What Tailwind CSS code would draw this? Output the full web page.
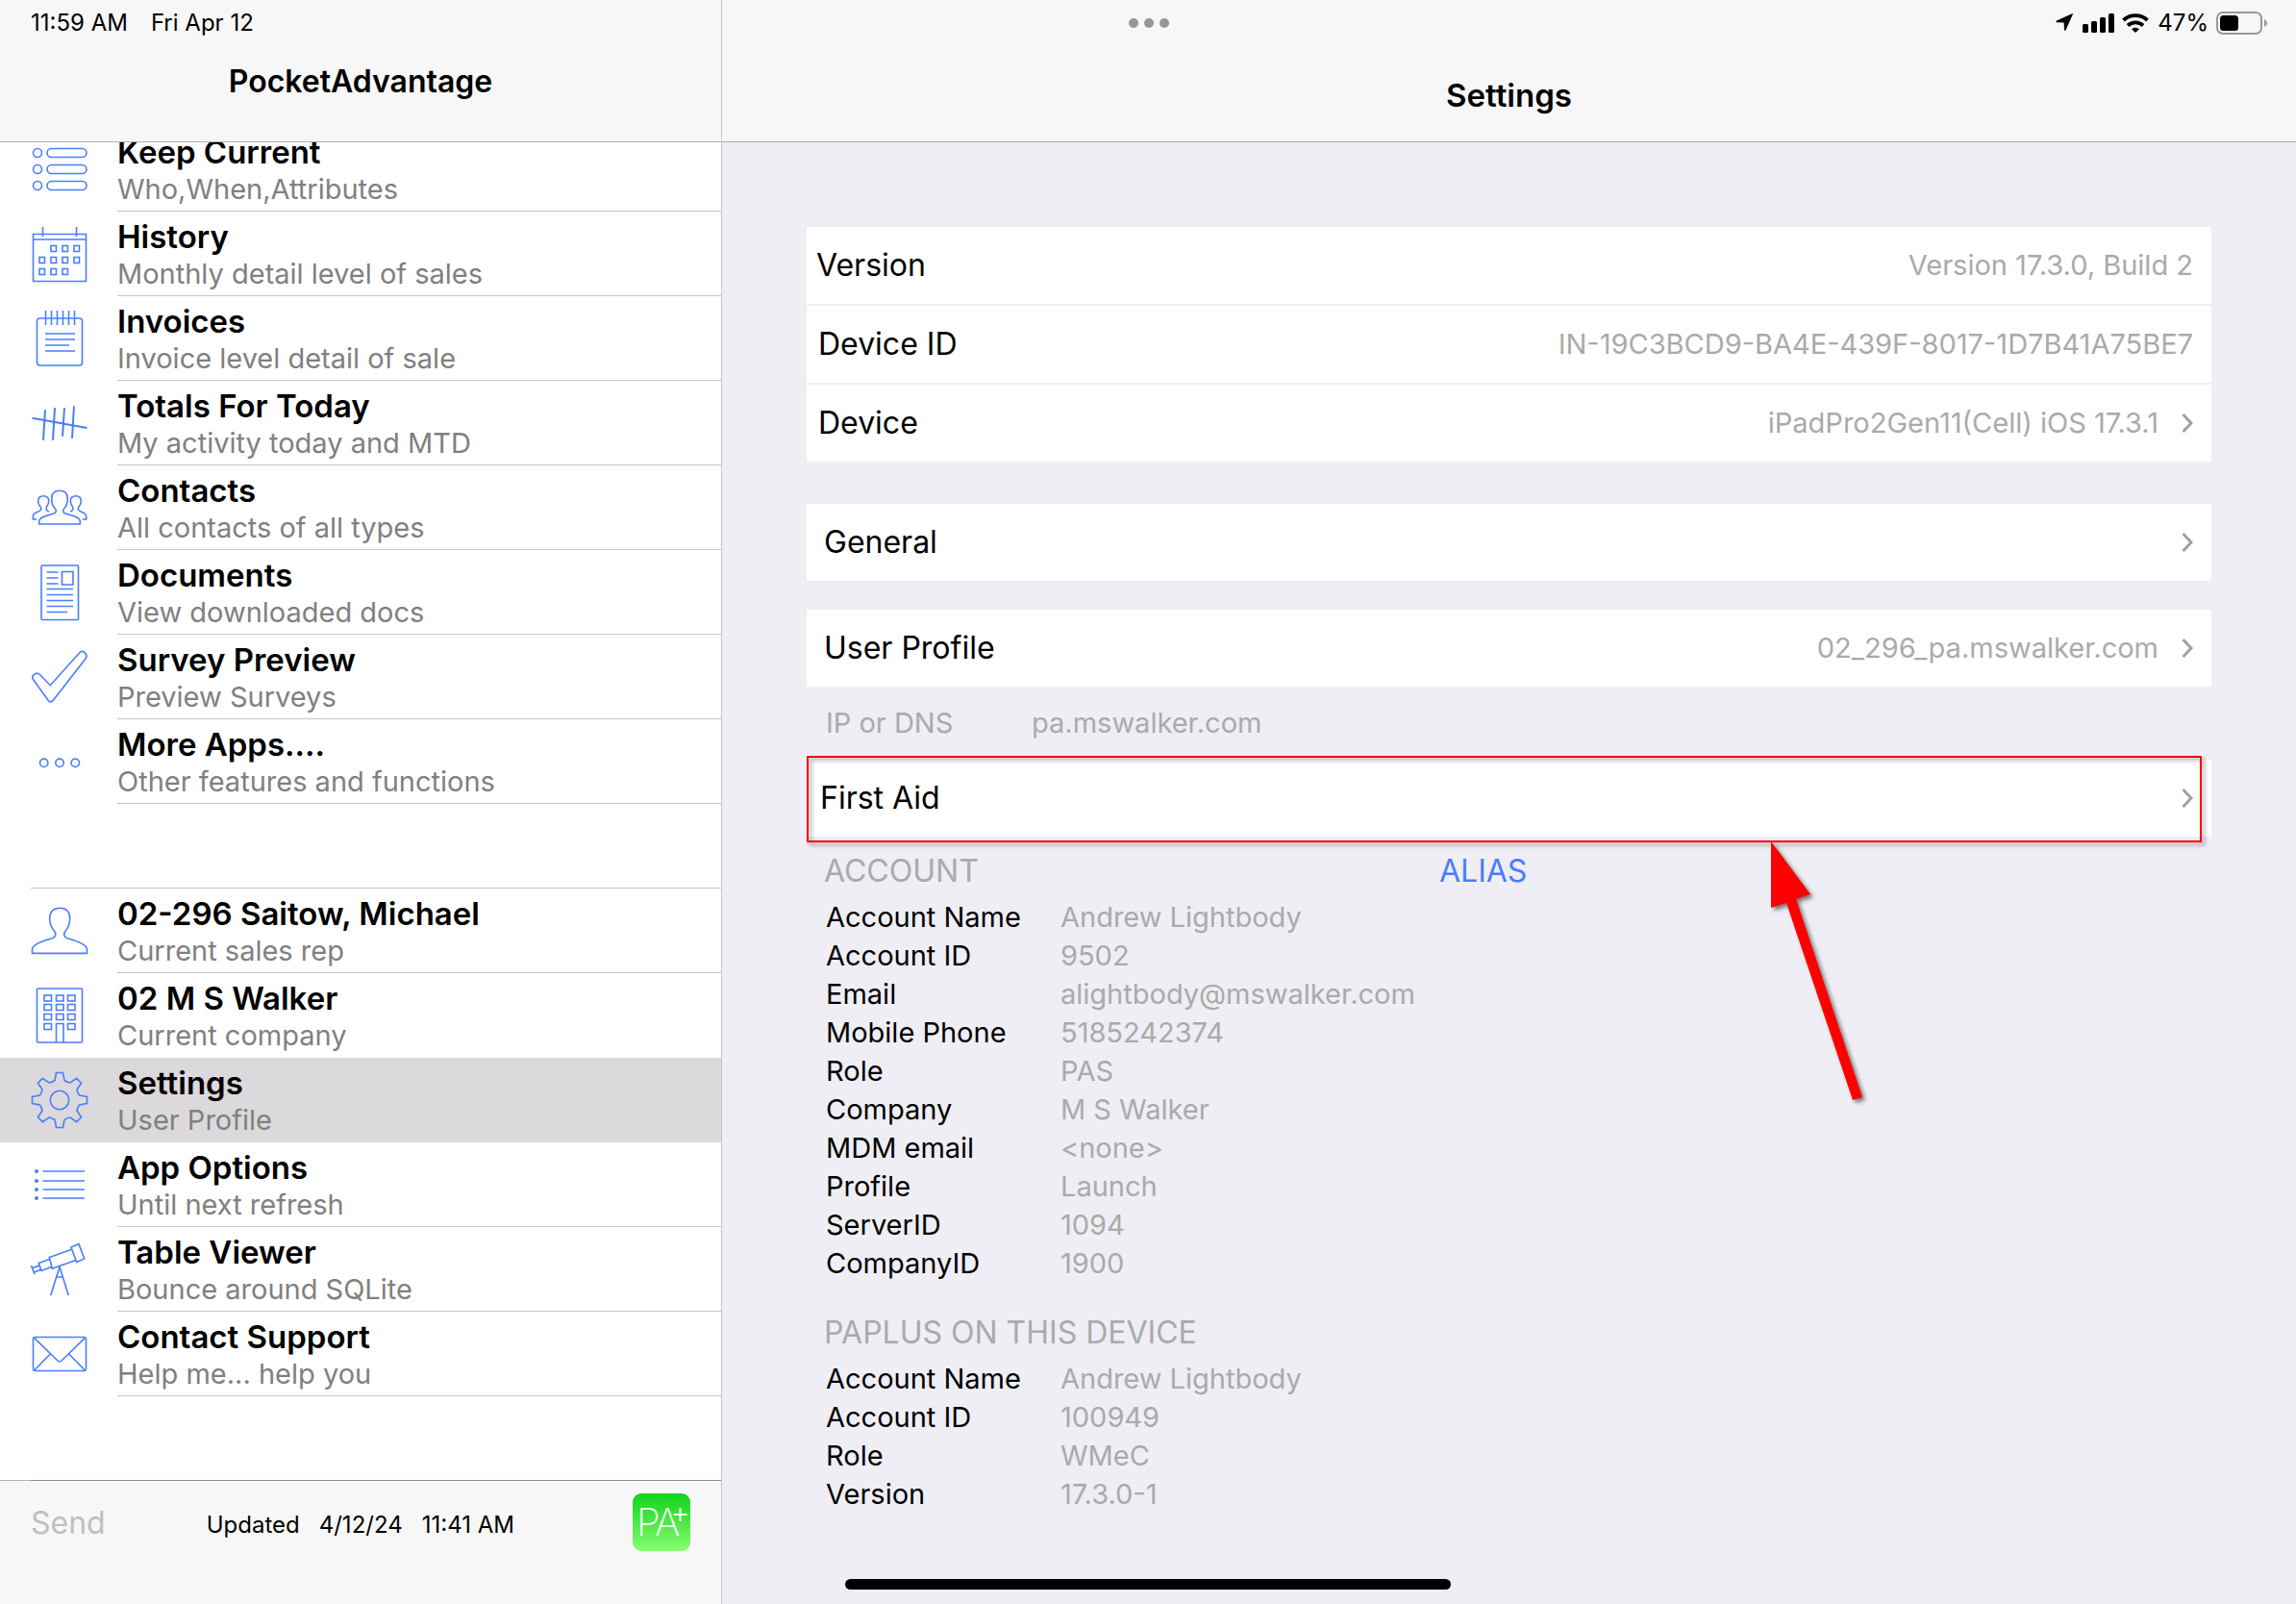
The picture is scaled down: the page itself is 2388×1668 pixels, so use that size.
<!DOCTYPE html>
<html lang="en">
<head>
    <meta charset="UTF-8">
    <meta name="viewport" content="width=device-width, initial-scale=1.0">
    <title>PocketAdvantage - Settings</title>
    <script src="https://cdn.jsdelivr.net/npm/@tailwindcss/browser@4"></script>
</head>
<body class="relative flex min-h-screen bg-[#efeef4] font-['Inter',sans-serif] text-black">

    <!-- Status bar -->
    <div class="absolute inset-x-0 top-0 z-20 grid h-12 grid-cols-3 items-center pl-8 pr-[30px] text-[24px] leading-8">
        <div class="flex gap-6">
            <span>11:59 AM</span>
            <span>Fri Apr 12</span>
        </div>
        <button type="button" aria-label="Multitasking" class="flex justify-center gap-[6px]">
            <span class="size-[10px] rounded-full bg-[#969696]"></span>
            <span class="size-[10px] rounded-full bg-[#969696]"></span>
            <span class="size-[10px] rounded-full bg-[#969696]"></span>
        </button>
        <div class="flex items-center justify-end gap-2">
            <svg class="h-6 w-[98px]" viewBox="0 0 98 24" aria-hidden="true">
                <path d="M18 2.600Q18.600 1.800 17.600 2L1 9.600Q-.4 10.600 1.200 11.200L8.600 11.500 9 19Q9.600 20.800 10.600 19.200Z"/>
                <rect x="28" y="13" width="6" height="9" rx="1.500"/>
                <rect x="37" y="10" width="6" height="12" rx="1.500"/>
                <rect x="46" y="6" width="6" height="16" rx="1.500"/>
                <rect x="55" y="2" width="6" height="20" rx="1.500"/>
                <g fill="none" stroke="#000" stroke-width="3.800">
                    <path d="M70.500 9a18.500 18.500 0 0 1 25 0"/>
                    <path d="M75 14.500a12 12 0 0 1 16 0"/>
                </g>
                <path d="M79 18.200a6 6 0 0 1 8 0L83 22Z"/>
            </svg>
            <span>47%</span>
            <svg class="h-6 w-[53px]" viewBox="0 0 53 24" aria-hidden="true">
                <rect x="1" y="1" width="46" height="22" rx="6" fill="none" stroke="#999" stroke-width="2"/>
                <rect x="4" y="4" width="19" height="16" rx="3.500"/>
                <path d="M50 8q3 1.500 3 4t-3 4Z" fill="#999"/>
            </svg>
        </div>
    </div>

    <!-- Sidebar -->
    <aside class="flex w-[751px] shrink-0 flex-col border-r border-[#c6c6c8] bg-white">
        <header class="relative z-10 h-[148px] border-b border-[#b0b0b2] bg-[#f7f7f7] pt-[65px]">
            <h1 class="text-center text-[32px] font-semibold leading-10">PocketAdvantage</h1>
        </header>
        <nav class="flex-1 overflow-hidden" aria-label="Main">
            <ul id="menu" class="-mt-4"></ul>
        </nav>
        <footer class="relative -mt-px flex h-[129px] items-start border-t border-black/30 bg-[#f7f7f7] bg-clip-padding pl-8 pr-8 pt-[13px]">
            <button type="button" disabled class="text-[32px] leading-[62px] text-[#bfbfbf]">Send</button>
            <p class="ml-[105px] flex gap-5 text-[24px] leading-[66px]">
                <span>Updated</span>
                <span>4/12/24</span>
                <span>11:41 AM</span>
            </p>
            <svg class="ml-auto size-[60px]" viewBox="0 0 60 60" role="img" aria-label="PA+">
                <defs>
                    <linearGradient id="logo" x1="0" y1="0" x2="0" y2="1">
                        <stop offset="0" stop-color="#10d41b"/>
                        <stop offset="1" stop-color="#88fd72"/>
                    </linearGradient>
                </defs>
                <rect width="60" height="60" rx="9" fill="url(#logo)"/>
                <text x="4" y="44" font-size="40" fill="#fff" class="font-extralight">P</text>
                <text x="23" y="44" font-size="40" fill="#fff" class="font-extralight">A</text>
                <path d="M49.500 15v14M42.500 22h14" stroke="#fff" stroke-width="2"/>
            </svg>
        </footer>
    </aside>

    <!-- Detail pane -->
    <main class="flex min-w-0 flex-1 flex-col">
        <header class="h-[148px] border-b border-[#a8a8ac] bg-[#f7f7f7] pt-[79px]">
            <h2 class="text-center text-[33px] font-semibold leading-10">Settings</h2>
        </header>

        <div class="px-[88px] pt-[88px] text-[29px]">
            <div class="flex flex-col gap-[2px]">
                <div class="flex h-20 items-center justify-between bg-white pl-[10px] pr-[19px]">
                    <span class="text-[32px]">Version</span>
                    <span class="text-[#aaa]">Version 17.3.0, Build 2</span>
                </div>
                <div class="flex h-20 items-center justify-between bg-white pl-3 pr-[19px]">
                    <span class="text-[32px]">Device ID</span>
                    <span class="text-[#aaa]">IN-19C3BCD9-BA4E-439F-8017-1D7B41A75BE7</span>
                </div>
                <button type="button" class="flex h-20 items-center bg-white pl-3 pr-[19px]">
                    <span class="text-[32px]">Device</span>
                    <span class="ml-auto mr-6 text-[#aaa]">iPadPro2Gen11(Cell) iOS 17.3.1</span>
                    <svg class="h-5 w-3" viewBox="0 0 12 20" fill="none" stroke="#a0a0a0" stroke-width="3"><path d="M1.500 1 10 10 1.500 19"/></svg>
                </button>
            </div>

            <button type="button" class="mt-11 flex h-20 w-full items-center justify-between bg-white pl-[18px] pr-[19px]">
                <span class="text-[32px]">General</span>
                <svg class="h-5 w-3" viewBox="0 0 12 20" fill="none" stroke="#a0a0a0" stroke-width="3"><path d="M1.500 1 10 10 1.500 19"/></svg>
            </button>

            <button type="button" class="mt-[30px] flex h-20 w-full items-center bg-white pl-[18px] pr-[19px]">
                <span class="text-[32px]">User Profile</span>
                <span class="ml-auto mr-6 text-[#aaa]">02_296_pa.mswalker.com</span>
                <svg class="h-5 w-3" viewBox="0 0 12 20" fill="none" stroke="#a0a0a0" stroke-width="3"><path d="M1.500 1 10 10 1.500 19"/></svg>
            </button>

            <dl class="grid h-[76px] grid-cols-[214px_1fr] items-center pl-5 text-[#aaa]">
                <dt>IP or DNS</dt>
                <dd>pa.mswalker.com</dd>
            </dl>

            <div class="relative">
                <button type="button" class="flex h-20 w-full items-center justify-between bg-white pl-[14px] pr-[19px]">
                    <span class="text-[32px]">First Aid</span>
                    <svg class="h-5 w-3" viewBox="0 0 12 20" fill="none" stroke="#a0a0a0" stroke-width="3"><path d="M1.500 1 10 10 1.500 19"/></svg>
                </button>
                <!-- Callout frame and arrow -->
                <div class="pointer-events-none absolute -top-1 left-0 right-[10px] h-[90px] border-2 border-[#f00] drop-shadow-[3px_3px_2px_rgba(0,0,0,0.4)]"></div>
                <svg class="pointer-events-none absolute right-[352px] top-[85px] h-[280px] w-[110px] drop-shadow-[3px_3px_2px_rgba(0,0,0,0.5)]" viewBox="0 0 110 280" fill="#f00" aria-hidden="true">
                    <path d="M4 0 45 55 30 60 99 266 89 269 20 64 4 69Z"/>
                </svg>
            </div>

            <div class="mt-4 grid grid-cols-[640px_1fr] justify-items-start pl-[18px] text-[32px] leading-10">
                <h3 class="text-[#aaa]">ACCOUNT</h3>
                <button type="button" class="text-[#4a7dff]">ALIAS</button>
            </div>
            <dl class="mt-2 grid grid-cols-[244px_1fr] pl-5 leading-10" id="account"></dl>

            <h3 class="mt-8 pl-[18px] text-[32px] leading-10 text-[#aaa]">PAPLUS ON THIS DEVICE</h3>
            <dl class="mt-2 grid grid-cols-[244px_1fr] pl-5 leading-10" id="paplus"></dl>
        </div>
    </main>

    <!-- Home indicator -->
    <div class="absolute bottom-[15px] left-1/2 h-[11px] w-[630px] -translate-x-1/2 rounded-full bg-black"></div>

    <script>
        const windows = (cols, rows, w, h, skip) => rows.map((y, r) => cols.map((x, c) =>
            skip.includes(`${r}${c}`) ? '' : `<rect x="${x}" y="${y}" width="${w}" height="${h}"/>`).join('')).join('');

        const icons = {
            list: '<circle cx="7" cy="13" r="4.5"/><circle cx="7" cy="30" r="4.5"/><circle cx="7" cy="47" r="4.5"/><rect x="17" y="8.5" width="41" height="9" rx="4.5"/><rect x="17" y="25.5" width="41" height="9" rx="4.5"/><rect x="17" y="42.5" width="41" height="9" rx="4.5"/>',
            calendar: '<path d="M2.500 9.500h55v49h-55ZM2.500 15h55M12.500 2v10M47.500 2v10"/>' + windows([9, 21, 33, 45], [21.5, 33.5, 45.5], 5.5, 6, ['00', '23']),
            notepad: '<rect x="6.500" y="9" width="47" height="49" rx="3"/><path d="M15.500 1v15M21.500 1v15M27.500 1v15M33.500 1v15M39.500 1v15M45.500 1v15M15 25h31M15 31h31M15 37h25M15 43h31"/>',
            tally: '<path stroke-width="2" d="M1.500 24.700 58.500 35M15 16.300 13 47.700M25 14 23 47.700M35 14 33 43.700M45 12.300 43 45.700"/>',
            people: '<path d="M8.700 47V43.700C9.500 39 18 38.500 25 35.500 27 34 26.500 32 25 30.500 22.500 28 21.700 25 21.700 20.500 21.700 15 25 12.300 30 12.300S38.300 15 38.300 20.500C38.300 25 37.500 28 35 30.500 33.500 32 33 34 35 35.500 42 38.500 50.500 39 51.300 43.700V47Z"/><path d="M6.300 42H2.300V38.700C3 34.500 8.500 34.500 10.300 32.500 11.300 31 10.500 29.500 9.500 28.300 8 26.500 7.700 24.500 7.700 23 7.700 19.500 10 17.700 13.200 17.700S18.700 19.500 18.700 23C18.700 25 18 27 16.800 28.500 15.500 30.500 15.800 33.500 19 34M53.700 42H57.700V38.700C57 34.500 51.500 34.500 49.700 32.500 48.700 31 49.500 29.500 50.500 28.300 52 26.500 52.300 24.500 52.300 23 52.300 19.500 50 17.700 46.800 17.700S41.300 19.500 41.300 23C41.300 25 42 27 43.200 28.500 44.500 30.500 44.200 33.500 41 34"/>',
            document: '<rect x="11" y="2" width="38.500" height="56.500" rx="1"/><path d="M16.500 9h12M16.500 15h12M16.500 21h12M16.500 26.500h27.500M16.500 32.500h27.500M16.500 38.500h27.500M16.500 44.500h27.500M16.500 50.500h21.500M32.500 8.500h11.500v13.500h-11.500Z"/>',
            check: '<path d="M2.500 32.500Q.5 29.500 3.500 27.500 6.500 24.800 9.500 27.500L20.300 38.700 50.500 5Q53 2 56 4.700 59.500 7.500 57 11L23.500 54Q21 57.500 18.300 54.500Z"/>',
            dots: '<circle cx="13.700" cy="31.300" r="4.200"/><circle cx="30" cy="31.300" r="4.200"/><circle cx="46.300" cy="31.300" r="4.200"/>',
            person: '<path d="M1.500 53.400V48.500C3 44 14 40 22.500 37.800 26 36.500 26.500 33.500 25 31 21.500 27 19.700 23 19.700 17.500 19.700 10 23 6.300 30.200 6.300S40.700 10 40.700 17.500C40.700 23 39 27 35.500 31 34 33.500 34.500 36.500 38 37.800 46 40 57 44 58.500 48.500V53.400Z"/>',
            building: '<rect x="6.500" y="2" width="47" height="56" rx="1"/><path d="M26.500 58V38.500h7.500V58"/>' + windows([14, 26.5, 38.5], [9, 18.5, 28.5, 38.5], 7.5, 6, ['31']),
            gear: '<path d="M25 9.500 26.500 1.500 33.500 1.500 35 9.500Q38 11.500 41 12L47.700 7.400 52.600 12.300 48 19Q48.500 22 50.500 25L58.500 26.500 58.500 33.500 50.500 35Q48.500 38 48 41L52.600 47.700 47.700 52.600 41 48Q38 48.500 35 50.500L33.500 58.500 26.500 58.500 25 50.500Q22 48.500 19 48L12.300 52.600 7.400 47.700 12 41Q11.500 38 9.500 35L1.500 33.500 1.500 26.500 9.500 25Q11.500 22 12 19L7.400 12.300 12.300 7.400 19 12Q22 11.500 25 9.500Z"/><circle cx="30" cy="30" r="9.700"/>',
            options: '<path d="M12.500 16h43.500M12.500 26h43.500M12.500 35h43.500M12.500 44h43.500"/><g fill="#4a7dff" stroke="none"><circle cx="6" cy="16" r="2"/><circle cx="6" cy="26" r="2"/><circle cx="6" cy="35" r="2"/><circle cx="6" cy="44" r="2"/></g>',
            telescope: '<path d="M42 7.100 50 3.600 55.700 18.900 47.700 22.500ZM42.700 9.300 19.300 17.500 22.300 29.300 46.700 20.500M19.500 19.500 8.300 23.600 11 31.400 22 27.300M9 26 2 28.600M10.300 30.500 3.500 33M.500 26 4 35M20.700 57 30 27.500 39.300 57M27 38h6.300"/>',
            mail: '<rect x="2.500" y="12.500" width="55" height="35" rx="2"/><path d="M3.700 13.400 28 37Q30 38.700 32 37L56.300 13.400M20.300 30 3.700 47M39.700 30 56.300 47"/>'
        };

        const menu = [
            { icon: 'list', title: 'Keep Current', note: 'Who,When,Attributes' },
            { icon: 'calendar', title: 'History', note: 'Monthly detail level of sales' },
            { icon: 'notepad', title: 'Invoices', note: 'Invoice level detail of sale' },
            { icon: 'tally', title: 'Totals For Today', note: 'My activity today and MTD' },
            { icon: 'people', title: 'Contacts', note: 'All contacts of all types' },
            { icon: 'document', title: 'Documents', note: 'View downloaded docs' },
            { icon: 'check', title: 'Survey Preview', note: 'Preview Surveys' },
            { icon: 'dots', title: 'More Apps....', note: 'Other features and functions' },
            null,
            { icon: 'person', title: '02-296 Saitow, Michael', note: 'Current sales rep' },
            { icon: 'building', title: '02 M S Walker', note: 'Current company', plain: true },
            { icon: 'gear', title: 'Settings', note: 'User Profile', plain: true, active: true },
            { icon: 'options', title: 'App Options', note: 'Until next refresh' },
            { icon: 'telescope', title: 'Table Viewer', note: 'Bounce around SQLite' },
            { icon: 'mail', title: 'Contact Support', note: 'Help me... help you' },
            null
        ];

        document.getElementById('menu').innerHTML = menu.map(item => {
            // null marks an empty row between groups
            if (!item) return '<li class="ml-8 h-[88px] border-b border-[#c6c6c8]"></li>';
            return `
                <li class="${item.active ? 'bg-[#dbd9dc]' : ''}">
                    <a href="#" class="flex h-[88px] pl-8" ${item.active ? 'aria-current="page"' : ''}>
                        <svg class="mr-[30px] mt-[14px] size-[60px] shrink-0" viewBox="0 0 60 60" fill="none" stroke="#4a7dff" stroke-width="1.600" aria-hidden="true">${icons[item.icon]}</svg>
                        <span class="flex-1 border-b pt-[6px] ${item.plain ? 'border-transparent' : 'border-[#c6c6c8]'}">
                            <span class="block text-[33px] font-semibold leading-10">${item.title}</span>
                            <span class="block text-[29px] leading-[38px] text-[#808080]">${item.note}</span>
                        </span>
                    </a>
                </li>`;
        }).join('');

        const fill = (id, rows) => {
            document.getElementById(id).innerHTML = rows.map(([label, value]) =>
                `<dt>${label}</dt><dd class="text-[#aaa]">${value}</dd>`).join('');
        };

        fill('account', [
            ['Account Name', 'Andrew Lightbody'],
            ['Account ID', '9502'],
            ['Email', 'alightbody@mswalker.com'],
            ['Mobile Phone', '5185242374'],
            ['Role', 'PAS'],
            ['Company', 'M S Walker'],
            ['MDM email', '&lt;none&gt;'],
            ['Profile', 'Launch'],
            ['ServerID', '1094'],
            ['CompanyID', '1900']
        ]);

        fill('paplus', [
            ['Account Name', 'Andrew Lightbody'],
            ['Account ID', '100949'],
            ['Role', 'WMeC'],
            ['Version', '17.3.0-1']
        ]);
    </script>
</body>
</html>
